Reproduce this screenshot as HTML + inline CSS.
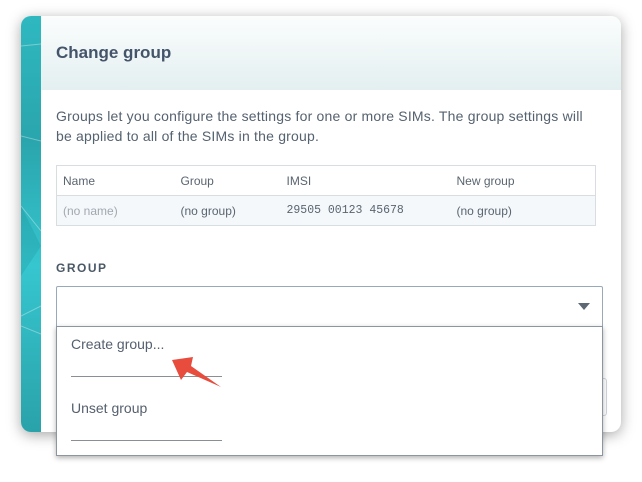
<!DOCTYPE html>
<html><head><meta charset="utf-8">
<style>
*{box-sizing:border-box;margin:0;padding:0}
body{width:642px;height:482px;background:#fff;font-family:"Liberation Sans",sans-serif;position:relative;overflow:hidden}
.dlg{position:absolute;left:21px;top:16px;width:600px;height:416px;background:#fff;border-radius:10px;box-shadow:0 3px 14px rgba(0,0,0,.35);overflow:hidden}
.strip{position:absolute;left:0;top:0;width:20px;height:100%;background:linear-gradient(180deg,#2fb8c0 0%,#2aa5ad 30%,#36c6cf 60%,#2aa2aa 100%)}
.hdr{position:absolute;left:20px;top:0;right:0;height:74px;background:linear-gradient(180deg,#fbfdfd,#e3eff0);}
.hdr h1{position:absolute;left:15px;top:27px;font-size:17px;font-weight:bold;color:#44546a}
.desc{position:absolute;left:35px;top:90px;width:560px;font-size:14px;line-height:20px;color:#55626f;letter-spacing:0.2px;white-space:nowrap}
table{position:absolute;left:35px;top:149px;width:540px;border-collapse:collapse;font-size:12px;color:#5a6570}
td{border-top:1px solid #d8dde2;border-bottom:1px solid #d8dde2;height:30px;padding-left:6px}
table{border:1px solid #d8dde2}
tr.r2{background:#f4f8fb}
.lbl{position:absolute;left:35px;top:245px;font-size:12px;font-weight:bold;letter-spacing:1.5px;color:#4a5866}
.sel{position:absolute;left:35px;top:270px;width:547px;height:48px;border:1px solid #9aa9ba;border-radius:2px}
.tri{position:absolute;right:12px;top:16px;width:0;height:0;border-left:6px solid transparent;border-right:6px solid transparent;border-top:7px solid #5d6875}
.btn{position:absolute;left:566px;top:362px;width:20px;height:38px;border:1px solid #d0d5da;border-radius:3px}
.dd{position:absolute;left:56px;top:326px;width:547px;height:130px;background:#fff;border:1px solid #8c96a0;box-shadow:0 2px 5px rgba(0,0,0,.3)}
.it{position:absolute;left:14px;font-size:14px;color:#55606e}
.ul{position:absolute;left:14px;width:151px;height:1px;background:#8a8f95}
</style></head><body>
<div class="dlg">
 <div class="strip">
  <svg width="20" height="416" style="position:absolute;left:0;top:0">
   <path d="M0 30 L20 28 M0 120 L20 125 M0 190 L20 215 M0 300 L20 290 M0 310 L20 318" stroke="rgba(255,255,255,.35)" stroke-width="1" fill="none"/>
   <path d="M0 190 L20 230 L0 260 Z" fill="rgba(0,80,90,.12)"/>
  </svg>
 </div>
 <div class="hdr"><h1>Change group</h1></div>
 <div class="desc">Groups let you configure the settings for one or more SIMs. The group settings will<br>be applied to all of the SIMs in the group.</div>
 <table>
  <tr><td style="width:118px">Name</td><td style="width:106px">Group</td><td style="width:170px">IMSI</td><td>New group</td></tr>
  <tr class="r2"><td style="color:#a0a8b0">(no name)</td><td>(no group)</td><td style="font-family:'Liberation Mono',monospace;font-size:11.5px">29505 00123 45678</td><td>(no group)</td></tr>
 </table>
 <div class="lbl">GROUP</div>
 <div class="sel"><div class="tri"></div></div>
 <div class="btn"></div>
</div>
<div class="dd">
 <div class="it" style="top:9px">Create group...</div>
 <div class="ul" style="top:49px"></div>
 <div class="it" style="top:73px">Unset group</div>
 <div class="ul" style="top:113px"></div>
</div>
<svg width="642" height="482" style="position:absolute;left:0;top:0">
 <path d="M172 360 L193 357 L191 366 L221 387 L187 372 L181 380 Z" fill="#e74c3c"/>
</svg>
</body></html>
